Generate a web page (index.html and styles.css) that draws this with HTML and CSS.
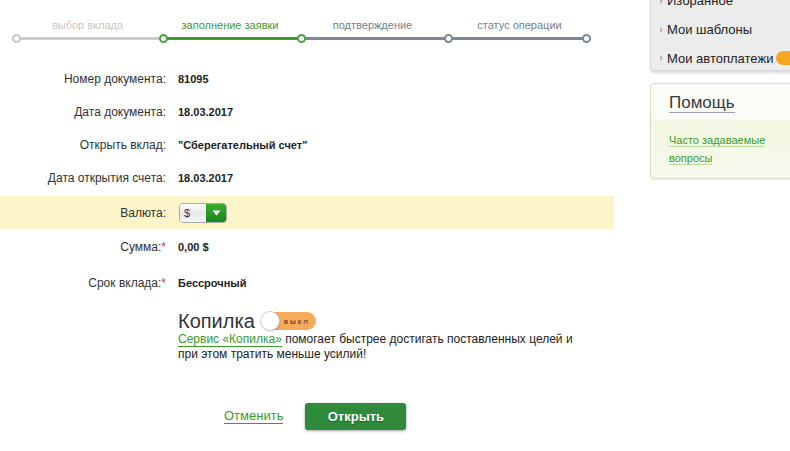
FILE: index.html
```html
<!DOCTYPE html>
<html lang="ru">
<head>
<meta charset="utf-8">
<title>Открытие вклада</title>
<link rel="stylesheet" href="styles.css">
</head>
<body>
<div class="page">
  <main class="main">
    <div class="stepper">
      <div class="step step-done" style="width:147px">
        <div class="step-label">выбор вклада</div>
        <div class="track"><span class="dot"></span><span class="line"></span></div>
      </div>
      <div class="step step-active" style="width:138px">
        <div class="step-label">заполнение заявки</div>
        <div class="track"><span class="dot"></span><span class="line"></span></div>
      </div>
      <div class="step step-next" style="width:147px">
        <div class="step-label">подтверждение</div>
        <div class="track"><span class="dot dot-green"></span><span class="line"></span></div>
      </div>
      <div class="step step-next" style="width:147px">
        <div class="step-label">статус операции</div>
        <div class="track"><span class="dot"></span><span class="line"></span><span class="dot"></span></div>
      </div>
    </div>

    <div class="form">
      <div class="row"><div class="label">Номер документа:</div><div class="value">81095</div></div>
      <div class="row"><div class="label">Дата документа:</div><div class="value">18.03.2017</div></div>
      <div class="row"><div class="label">Открыть вклад:</div><div class="value">"Сберегательный счет"</div></div>
      <div class="row"><div class="label">Дата открытия счета:</div><div class="value">18.03.2017</div></div>
      <div class="row row-hl">
        <div class="label">Валюта:</div>
        <div class="value">
          <div class="select"><span class="select-text">$</span><span class="select-btn"><svg width="9" height="6" viewBox="0 0 9 6"><path d="M0.5 0.5h8L4.5 5.5z" fill="#fff"/></svg></span></div>
        </div>
      </div>
      <div class="row row-tall"><div class="label">Сумма:<span class="req">*</span></div><div class="value">0,00 $</div></div>
      <div class="row row-tall"><div class="label">Срок вклада:<span class="req">*</span></div><div class="value">Бессрочный</div></div>
    </div>

    <div class="piggy">
      <div class="piggy-head">
        <span class="piggy-title">Копилка</span>
        <span class="toggle"><span class="knob"></span><span class="toggle-text">выкл</span></span>
      </div>
      <p class="piggy-desc"><a class="link" href="#">Сервис «Копилка»</a> помогает быстрее достигать поставленных целей и при этом тратить меньше усилий!</p>
    </div>

    <div class="actions">
      <a class="link cancel" href="#">Отменить</a>
      <button class="btn" type="button">Открыть</button>
    </div>
  </main>

  <aside class="side">
    <div class="menu">
      <div class="menu-item"><span class="arrow"></span>Избранное</div>
      <div class="menu-item"><span class="arrow"></span>Мои шаблоны</div>
      <div class="menu-item menu-item-last"><span class="arrow"></span>Мои автоплатежи <span class="badge"></span></div>
    </div>
    <div class="help">
      <div class="help-head"><span class="help-title">Помощь</span></div>
      <div class="help-body"><a class="help-link" href="#">Часто задаваемые вопросы</a></div>
    </div>
  </aside>
</div>
</body>
</html>
```

FILE: styles.css
```css
html, body {
  margin: 0;
  padding: 0;
  background: #fff;
  overflow: hidden;
}

body {
  font-family: "Liberation Sans", Arial, sans-serif;
  color: #333;
  width: 790px;
  height: 451px;
}

.page {
  display: flex;
  gap: 36px;
  width: 790px;
}

.main {
  width: 614px;
  flex: none;
}

/* progress steps */
.stepper {
  display: flex;
  padding: 19px 0 0 12px;
  height: 43px;
  box-sizing: border-box;
}

.step {
  flex: none;
  display: flex;
  flex-direction: column;
}

.step-label {
  font-size: 11px;
  line-height: 13px;
  height: 13px;
  text-align: center;
  padding-left: 4px;
  white-space: nowrap;
}

.track {
  display: flex;
  align-items: center;
  height: 10px;
  margin-top: 1px;
}

.dot {
  flex: none;
  width: 5px;
  height: 5px;
  border-radius: 50%;
  background: #fff;
  border: 2px solid #7a8a95;
  position: relative;
  z-index: 1;
}

.line {
  flex: 1;
  height: 3px;
  margin: 0 -1px;
}

.step-done .step-label { color: #c6c6c6; }
.step-done .dot { border-color: #c8c8c8; }
.step-done .line { background: #cbcbcb; }

.step-active .step-label { color: #3e9a2e; }
.step-active .dot { border-color: #4aa23c; }
.step-active .line { background: #3f9a30; }

.step-next .step-label { color: #6f8190; }
.step-next .line { background: #7a8a95; }
.step-next .dot-green { border-color: #4aa23c; }

/* form rows */
.form {
  margin-top: 19px;
}

.row {
  display: flex;
  align-items: center;
  height: 33px;
  gap: 12px;
}

.row-hl {
  background: #fcf5c9;
  margin-top: 2px;
}

.row-tall {
  height: 36px;
}

.label {
  width: 166px;
  flex: none;
  text-align: right;
  font-size: 12px;
  color: #333;
}

.req {
  color: #e0302a;
}

.value {
  font-size: 11px;
  font-weight: bold;
  color: #222;
}

/* currency select */
.select {
  display: flex;
  width: 48px;
  height: 20px;
  border: 1px solid #a9a9a9;
  border-radius: 4px;
  overflow: hidden;
  box-sizing: border-box;
  margin-left: 1px;
}

.select-text {
  flex: 1;
  background: linear-gradient(#ffffff, #e8e8e8 50%, #f6f6f6);
  font-weight: normal;
  font-size: 11px;
  color: #335;
  padding-left: 4px;
  line-height: 18px;
}

.select-btn {
  width: 20px;
  background: linear-gradient(#3daa2e, #17871a);
  display: flex;
  align-items: center;
  justify-content: center;
}

/* piggy bank */
.piggy {
  margin-left: 178px;
  margin-top: 9px;
}

.piggy-head {
  display: flex;
  align-items: center;
  gap: 5px;
  height: 22px;
}

.piggy-title {
  font-size: 20px;
  color: #333;
  line-height: 22px;
}

.toggle {
  display: flex;
  align-items: center;
  width: 55px;
  height: 18px;
  border-radius: 9px;
  background: #f6ab5c;
  margin-left: 1px;
}

.knob {
  width: 18px;
  height: 18px;
  border-radius: 50%;
  background: #fff;
  box-shadow: 0 0 0 1px #d0d0d0, 1px 1px 2px rgba(0,0,0,0.25);
  box-sizing: border-box;
}

.toggle-text {
  font-size: 8px;
  letter-spacing: 2px;
  color: #333;
  margin-left: 5px;
}

.piggy-desc {
  margin: 0;
  font-size: 12px;
  line-height: 15px;
  width: 400px;
  color: #222;
}

.link {
  color: #3a9a2a;
  text-decoration: none;
  border-bottom: 1px solid #3a9a2a;
}

/* buttons */
.actions {
  display: flex;
  align-items: center;
  margin-top: 41px;
  padding-left: 224px;
  gap: 22px;
}

.cancel {
  font-size: 13px;
  line-height: 14px;
}

.btn {
  width: 101px;
  height: 27px;
  border: 0;
  border-radius: 3px;
  background: #2f8a3a;
  color: #fff;
  font-family: "Liberation Sans", Arial, sans-serif;
  font-weight: bold;
  font-size: 13px;
  text-shadow: 0 1px 1px rgba(0,0,0,0.35);
  box-shadow: 0 1px 3px rgba(0,0,0,0.35);
}

/* sidebar */
.side {
  flex: none;
  width: 160px;
}

.menu {
  margin-top: -15px;
  background: #ececec;
  border: 1px solid #d6d6d6;
  border-right: 0;
  border-radius: 0 0 0 4px;
  box-shadow: 0 2px 3px rgba(0,0,0,0.15);
  padding: 0 0 0 9px;
}

.menu-item {
  height: 29px;
  display: flex;
  align-items: center;
  font-size: 13px;
  color: #222;
  white-space: nowrap;
}

.menu-item-last {
  height: 26px;
  align-items: flex-start;
  padding-top: 7px;
  box-sizing: border-box;
}

.menu-item-last .arrow {
  margin-top: 4px;
}

.arrow {
  width: 0;
  height: 0;
  border-left: 3px solid #b5b5b5;
  border-top: 3px solid transparent;
  border-bottom: 3px solid transparent;
  margin-right: 4px;
}

.badge {
  width: 22px;
  height: 14px;
  border-radius: 7px;
  background: #f5a623;
  margin-left: 3px;
}

.help {
  margin-top: 12px;
  height: 96px;
  border: 1px solid #dedbc8;
  border-right: 0;
  border-radius: 4px 0 0 4px;
  box-sizing: border-box;
  overflow: hidden;
  background: linear-gradient(#fdfdf8 0, #fdfdf8 35px, #f3f8e3 36px, #f6f9ec 100%);
  box-shadow: 0 1px 2px rgba(0,0,0,0.08);
}

.help-head {
  height: 35px;
  padding: 9px 0 0 18px;
  box-sizing: border-box;
}

.help-title {
  font-size: 17px;
  line-height: 19px;
  color: #3a3a3a;
  border-bottom: 1px solid #9aa0a8;
  display: inline-block;
}

.help-body {
  padding: 11px 0 0 18px;
  width: 110px;
}

.help-link {
  font-size: 11px;
  line-height: 14px;
  color: #3a9a2a;
  text-decoration: none;
  border-bottom: 1px solid #b6dc9a;
}
```
